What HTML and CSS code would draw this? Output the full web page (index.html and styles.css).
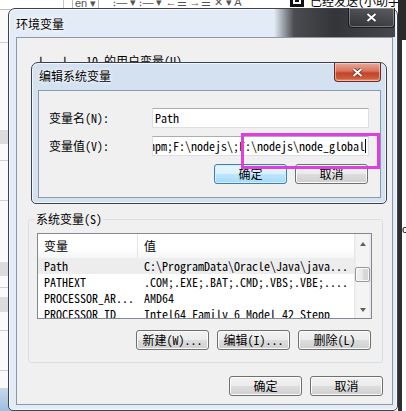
FILE: index.html
```html
<!DOCTYPE html>
<html lang="zh-CN">
<head>
  <meta charset="UTF-8">
  <title>环境变量</title>
  <link rel="stylesheet" href="styles.css">
</head>
<body>
  <!-- desktop behind the dialogs -->
  <div class="bg-doc"></div>
  <div class="bg-ribbon">
    <span class="rb-lang">en ▾</span>
    <span class="rb-tools">⁝— ▾  ⁝— ▾  ←☰ →☰  ✕ ▾  A</span>
  </div>
  <div class="bg-mail"><span class="mail-icon"></span><span class="mail-text">已经发送(小助手)</span></div>
  <div class="bg-right"><span class="bg-char">c</span></div>

  <!-- Environment variables -->
  <div class="win env">
    <div class="title-bar">
      <span class="title">环境变量</span>
      <span class="shade"></span>
      <span class="close glass">
        <svg width="11" height="9" viewBox="0 0 11 9"><path d="M1.5 1L9.5 8M9.5 1L1.5 8" stroke="#333" stroke-width="3.6"/><path d="M1.5 1L9.5 8M9.5 1L1.5 8" stroke="#fff" stroke-width="2"/></svg>
      </span>
    </div>
    <div class="client">
      <div class="user-vars">l - l - 10 的用户变量(U)</div>
      <div class="group">
        <span class="legend">系统变量(S)</span>
        <div class="list">
          <div class="list-body">
            <div class="list-head"><span class="c1">变量</span><span class="c2">值</span></div>
            <div class="row sel"><span class="c1">Path</span><span class="c2">C:\ProgramData\Oracle\Java\java...</span></div>
            <div class="row"><span class="c1">PATHEXT</span><span class="c2">.COM;.EXE;.BAT;.CMD;.VBS;.VBE;....</span></div>
            <div class="row"><span class="c1">PROCESSOR_AR...</span><span class="c2">AMD64</span></div>
            <div class="row"><span class="c1">PROCESSOR_ID</span><span class="c2">Intel64 Family 6 Model 42 Stepp</span></div>
          </div>
          <div class="vscroll">
            <span class="sb-btn"><span class="tri up"></span></span>
            <span class="sb-track"><span class="thumb"></span></span>
            <span class="sb-btn"><span class="tri down"></span></span>
          </div>
        </div>
        <div class="btns">
          <button class="btn">新建(W)...</button>
          <button class="btn">编辑(I)...</button>
          <button class="btn">删除(L)</button>
        </div>
      </div>
      <div class="btns main">
        <button class="btn">确定</button>
        <button class="btn">取消</button>
      </div>
    </div>
  </div>

  <!-- Edit system variable -->
  <div class="win edit">
    <div class="title-bar">
      <span class="title">编辑系统变量</span>
      <span class="close red">
        <svg width="11" height="9" viewBox="0 0 11 9"><path d="M1.5 1L9.5 8M9.5 1L1.5 8" stroke="#6b2a1c" stroke-width="3.6"/><path d="M1.5 1L9.5 8M9.5 1L1.5 8" stroke="#fff" stroke-width="2"/></svg>
      </span>
    </div>
    <div class="client">
      <div class="field">
        <label>变量名(N):</label>
        <div class="input">Path</div>
      </div>
      <div class="field">
        <label>变量值(V):</label>
        <div class="input tail"><span>C:\Users\lu\AppData\Roaming\npm;F:\nodejs\;F:\nodejs\node_global</span><span class="caret"></span></div>
      </div>
      <div class="btns">
        <button class="btn default">确定</button>
        <button class="btn">取消</button>
      </div>
      <div class="mark"></div>
    </div>
  </div>
</body>
</html>
```

FILE: styles.css
```css
* {
  box-sizing: border-box;
}
body {
  margin: 0;
  width: 406px;
  height: 411px;
  overflow: hidden;
  position: relative;
  background: #fff;
  font: 12px/14px "Noto Sans Mono CJK SC", "Noto Sans CJK SC", sans-serif;
  color: #000;
}

/* desktop behind */
.bg-doc {
  position: absolute;
  left: 0;
  top: 0;
  width: 64px;
  height: 411px;
  border-right: 1px solid #c8c8c8;
  background:
    linear-gradient(#fff, #fff) 0 0 / 64px 9px no-repeat,
    linear-gradient(#bdbdbd, #bdbdbd) 0 9px / 64px 1px no-repeat,
    linear-gradient(#d0d0d0, #d0d0d0) 0 42px / 64px 1px no-repeat,
    linear-gradient(#dcdcdc, #dcdcdc) 0 130px / 64px 14px no-repeat,
    linear-gradient(#d0d0d0, #d0d0d0) 0 160px / 64px 1px no-repeat,
    linear-gradient(#d0d0d0, #d0d0d0) 0 200px / 64px 1px no-repeat,
    linear-gradient(#dcdcdc, #dcdcdc) 0 262px / 64px 14px no-repeat,
    linear-gradient(#d0d0d0, #d0d0d0) 0 287px / 64px 1px no-repeat,
    linear-gradient(#dcdcdc, #dcdcdc) 0 297px / 64px 15px no-repeat,
    linear-gradient(#d0d0d0, #d0d0d0) 0 330px / 64px 1px no-repeat,
    linear-gradient(#d0d0d0, #d0d0d0) 0 370px / 64px 1px no-repeat,
    linear-gradient(#c8d8ea, #9fbde0) 0 388px / 64px 23px no-repeat,
    #fafafa;
}
.bg-ribbon {
  position: absolute;
  left: 72px;
  top: -5px;
  width: 218px;
  height: 14px;
  display: flex;
  gap: 14px;
  font: 11px/14px "Liberation Sans", sans-serif;
  color: #555;
}
.rb-lang {
  border: 1px solid #bbb;
  padding: 0 2px;
}
.bg-mail {
  position: absolute;
  left: 290px;
  top: -6px;
  display: flex;
  gap: 6px;
  align-items: center;
}
.mail-icon {
  width: 14px;
  height: 12px;
  background: #111;
  border: 3px solid #111;
  box-shadow: inset 0 0 0 2px #fff;
}
.bg-right {
  position: absolute;
  right: 0;
  top: 0;
  width: 8px;
  height: 411px;
  background: linear-gradient(90deg, #2e2e2e 4px, #fff 4px);
  border-top: 40px solid #2a2a2a;
}
.bg-char {
  position: absolute;
  left: 4px;
  top: 183px;
  font: 11px/12px "Liberation Sans", sans-serif;
}

/* window frames */
.win {
  position: absolute;
  display: flex;
  flex-direction: column;
  border: 1px solid #3a4450;
  border-radius: 7px 7px 5px 5px;
  box-shadow: inset 0 0 0 1px rgba(255, 255, 255, 0.7);
}
.env {
  left: 8px;
  top: 8px;
  width: 390px;
  height: 403px;
  padding: 0 4px 5px 7px;
  background: #e3ecf6;
}
.edit {
  left: 31px;
  top: 62px;
  width: 356px;
  height: 142px;
  padding: 0 5px 5px 6px;
  background: #d3e1f0;
}
.title-bar {
  display: flex;
  align-items: flex-start;
  flex: none;
}
.env .title-bar {
  height: 28px;
  padding-top: 8px;
}
.edit .title-bar {
  height: 27px;
  padding-top: 6px;
}
/* dark desktop showing through the glass */
.shade {
  flex: 1;
  align-self: stretch;
  margin: -8px -47px 0 210px;
  background: linear-gradient(90deg, #e3ecf6, #4a4c50 20px, #333538 60px, #45474b);
}
.title {
  flex: none;
  text-shadow: 0 0 6px #fff, 0 0 3px #fff;
}
.edit .title {
  margin-left: 1px;
}
.close {
  position: relative;
  flex: none;
  margin-left: auto;
  display: flex;
  align-items: center;
  justify-content: center;
  width: 47px;
  border-radius: 0 0 4px 4px;
}
.close.glass {
  height: 20px;
  margin-top: -9px;
  margin-right: -2px;
  border: 1px solid #1e1e1e;
  border-top: none;
  box-shadow: inset 0 0 0 1px rgba(255, 255, 255, 0.3);
  background: linear-gradient(rgba(255, 255, 255, 0.12), rgba(255, 255, 255, 0.04) 50%, rgba(0, 0, 0, 0.1));
}
.close.red {
  height: 19px;
  margin-top: -6px;
  border: 1px solid #6e2a20;
  border-top: none;
  box-shadow: inset 0 0 0 1px rgba(255, 220, 210, 0.55);
  background: linear-gradient(#e9ab9c, #d9735c 45%, #c3452b 55%, #cc5a3c 85%, #e8a07c);
}
.client {
  flex: 1;
  background: #f0f0f0;
  border: 1px solid #8a99aa;
}

/* environment client */
.env .client {
  display: flex;
  flex-direction: column;
  padding: 16px 0 0 21px;
}
.user-vars {
  height: 14px;
}
.group {
  position: relative;
  margin: 151px 9px 0 -10px;
  padding: 13px 10px 12px 8px;
  border: 1px solid #d5dfe5;
  border-radius: 3px;
}
.legend {
  position: absolute;
  left: 6px;
  top: -8px;
  padding: 0 1px;
  background: #f0f0f0;
}
.list {
  display: flex;
  height: 86px;
  border: 1px solid #828790;
  background: #fff;
}
.list-body {
  flex: 1;
  overflow: hidden;
  white-space: nowrap;
}
.list-head {
  display: flex;
  height: 24px;
  align-items: center;
  background: linear-gradient(#fff, #fff 55%, #f5f6f7);
}
.list-head .c1 {
  height: 24px;
  display: flex;
  align-items: center;
  border-right: 1px solid #e5e5e5;
}
.c1 {
  flex: none;
  width: 100px;
  padding-left: 6px;
  overflow: hidden;
}
.c2 {
  padding-left: 6px;
}
.row {
  display: flex;
  height: 16px;
  line-height: 16px;
}
.row.sel {
  background: #ededed;
}
.vscroll {
  flex: none;
  width: 17px;
  display: flex;
  flex-direction: column;
  background: linear-gradient(90deg, #e4e4e4, #f4f4f4 15%, #f4f4f4 85%, #e4e4e4);
}
.sb-btn {
  height: 17px;
  display: flex;
  align-items: center;
  justify-content: center;
}
.sb-track {
  flex: 1;
  padding: 16px 1px 0;
}
.thumb {
  display: block;
  height: 15px;
  border: 1px solid #979797;
  border-radius: 2px;
  background: linear-gradient(90deg, #f3f3f3, #e8e8e8 50%, #d9d9d9 51%, #d4d4d4);
  box-shadow: inset 0 0 0 1px #fafafa;
}
.tri {
  width: 0;
  height: 0;
  border-left: 3px solid transparent;
  border-right: 3px solid transparent;
}
.tri.up {
  border-bottom: 4px solid #606060;
  margin-top: 2px;
}
.tri.down {
  border-top: 4px solid #606060;
}
.btns {
  display: flex;
  justify-content: flex-end;
  gap: 8px;
  margin-top: 11px;
  margin-right: 1px;
}
.btns.main {
  margin: 13px 9px 0 0;
}
.btn {
  width: 73px;
  height: 20px;
  padding: 0;
  font: inherit;
  line-height: 16px;
  color: #000;
  border: 1px solid #707070;
  border-radius: 3px;
  background: linear-gradient(#f2f2f2, #ebebeb 50%, #dddddd 51%, #cfcfcf);
  box-shadow: inset 0 0 0 1px #fbfbfb;
}
.btn.default {
  border-color: #3c7fb1;
  background: linear-gradient(#eaf6fd, #d9f0fc 50%, #bee6fd 51%, #a7d9f5);
  box-shadow: inset 0 0 0 1px #d6eefb;
}

/* edit client */
.edit .client {
  position: relative;
  padding: 17px 12px 0 10px;
}
.field {
  display: flex;
  align-items: center;
  height: 20px;
  margin-bottom: 8px;
}
.field label {
  flex: none;
  width: 103px;
}
.input {
  flex: none;
  width: 217px;
  height: 20px;
  padding: 0 2px;
  display: flex;
  align-items: center;
  background: #fff;
  border: 1px solid #dbdfe6;
  border-top-color: #abadb3;
  white-space: nowrap;
  overflow: hidden;
}
.input.tail {
  justify-content: flex-end;
}
.caret {
  flex: none;
  width: 1px;
  height: 14px;
  background: #000;
}
.edit .btns {
  margin-top: 3px;
  margin-right: 0;
}
.mark {
  position: absolute;
  left: 202px;
  top: 42px;
  width: 139px;
  height: 36px;
  border: 3px solid #e03fe0;
}
```
